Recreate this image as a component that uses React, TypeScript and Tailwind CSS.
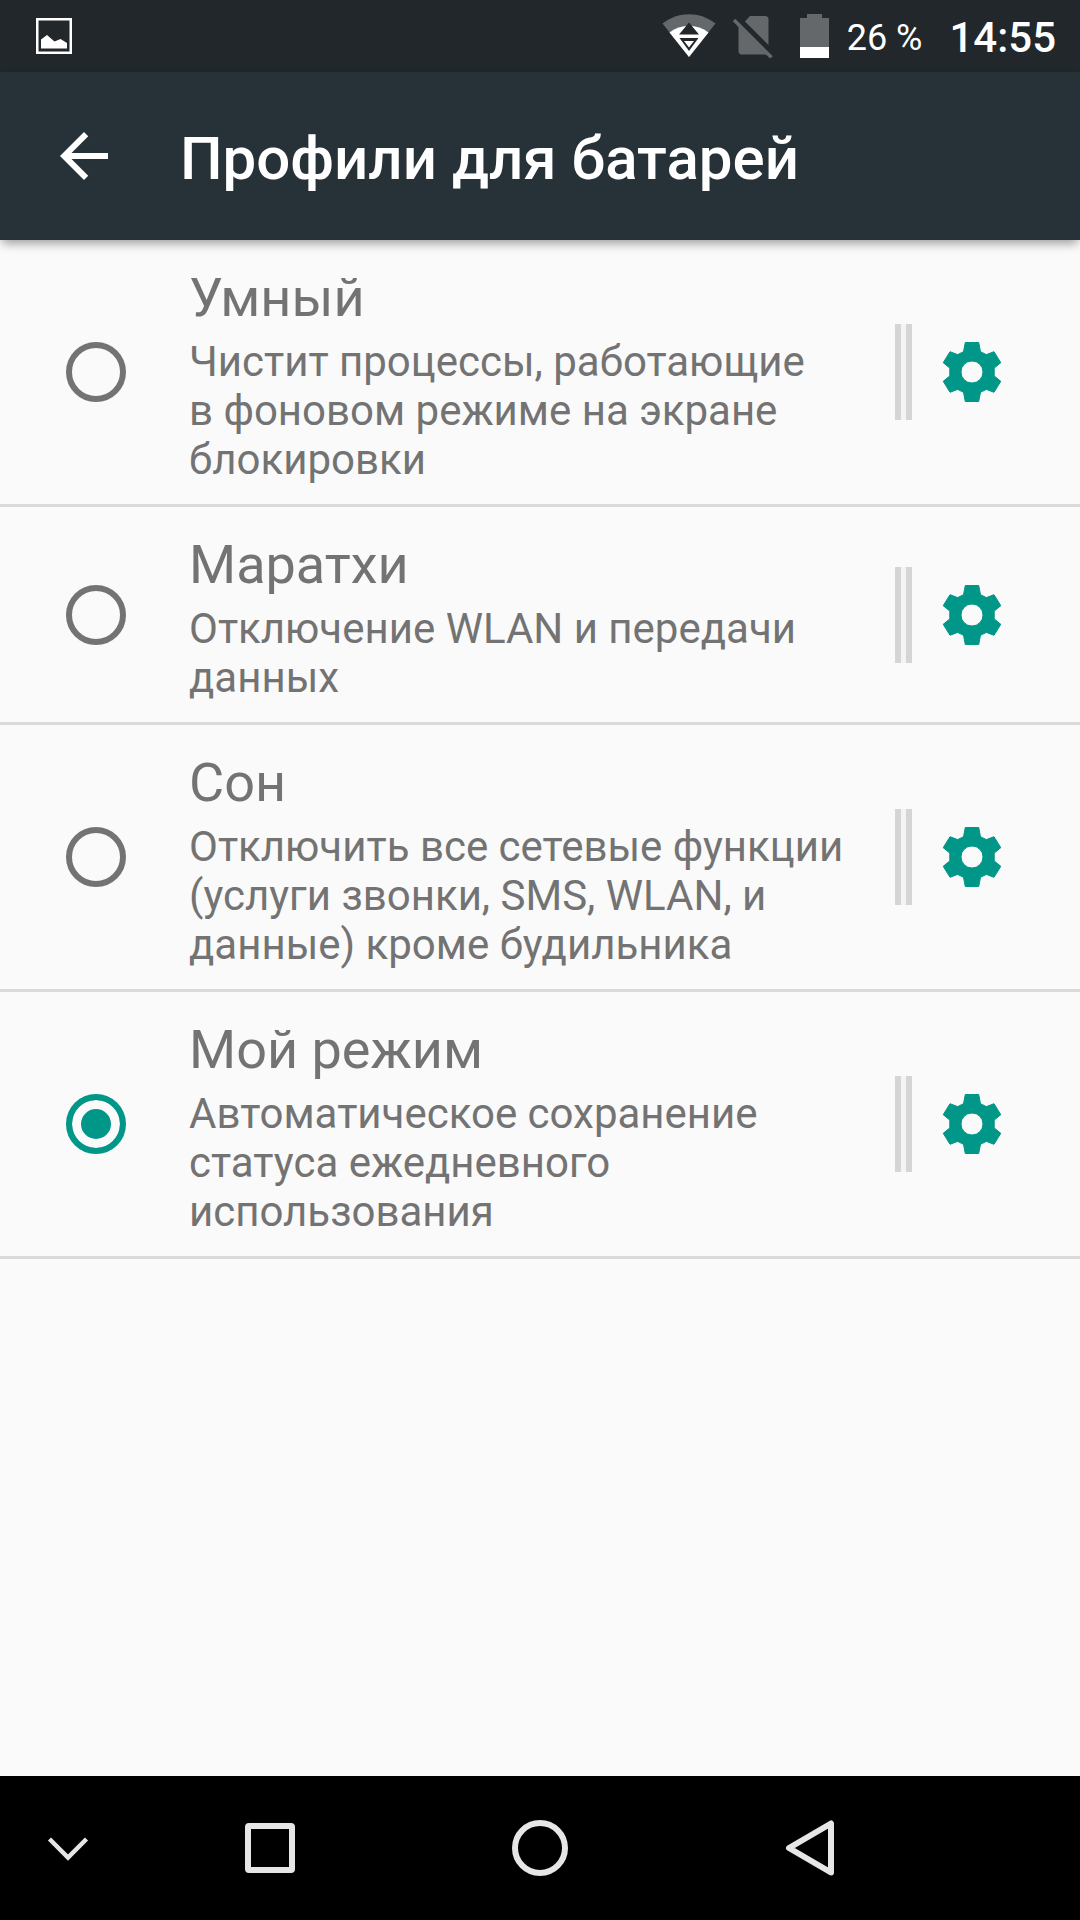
import { useState } from "react";
import { MdArrowBack } from "react-icons/md";

type Profile = { id: string; title: string; description: string };

const profiles: Profile[] = [
  {
    id: "smart",
    title: "Умный",
    description: "Чистит процессы, работающие в\u00a0фоновом режиме на экране блокировки",
  },
  {
    id: "marathon",
    title: "Маратхи",
    description: "Отключение WLAN и передачи данных",
  },
  {
    id: "sleep",
    title: "Сон",
    description: "Отключить все сетевые функции (услуги звонки, SMS, WLAN, и данные) кроме будильника",
  },
  {
    id: "custom",
    title: "Мой режим",
    description: "Автоматическое сохранение статуса ежедневного использования",
  },
];

function StatusBar() {
  return (
    <div className="flex h-[72px] items-center bg-[#22272b] pl-9 pr-6 text-white">
      <svg className="size-9" viewBox="0 0 36 36" aria-hidden="true">
        <rect x="1.25" y="1.25" width="33.5" height="33.5" fill="none" stroke="#fff" strokeWidth="2.5" />
        <path d="M5 30.5V21.5L11 17L18.500 23.500L24.500 21L31 25V30.500Z" fill="#fff" />
      </svg>
      <svg className="ml-auto h-11 w-[54px]" viewBox="0 0 54 44" aria-hidden="true">
        <path d="M0.500 9.500C16 -3 38 -3 53.500 9.500L27 43Z" fill="#64686b" />
        <path d="M7.500 18.500C19 9.500 35 9.500 46.500 18.500L27 43Z" fill="#fff" />
        <path d="M27 8.500L37 20.500H17Z" fill="#22272b" />
        <path d="M17.500 24H36.500L27 37Z" fill="#22272b" />
        <path d="M22 27H32L27 33.500Z" fill="#fff" />
      </svg>
      <svg className="ml-4 h-11 w-[42px]" viewBox="0 0 42 44" aria-hidden="true">
        <path d="M13 7.500L18 2H33Q36.500 2 36.500 5.500V31Z" fill="#64686b" />
        <path d="M6.500 12.500L36 42Q35 40.500 32.500 40.500H10Q6.500 40.500 6.500 37Z" fill="#64686b" />
        <path d="M2 6L39.500 43.500" stroke="#64686b" strokeWidth="3.500" />
      </svg>
      <svg className="ml-[26px] h-11 w-[29px]" viewBox="0 0 29 44" aria-hidden="true">
        <path d="M7 0H22V4H29V33H0V4H7Z" fill="#64686b" />
        <path d="M0 33H29V44H0Z" fill="#fff" />
      </svg>
      <span className="ml-[18px] pt-[3px] text-[36px] leading-[42px]">26 %</span>
      <span className="ml-[27px] pt-[3px] text-[42px] leading-[50px] font-medium">14:55</span>
    </div>
  );
}

function GearIcon() {
  return (
    <svg className="size-[60px]" viewBox="0 0 60 60" aria-hidden="true">
      <path
        fill="currentColor"
        fillRule="evenodd"
        stroke="currentColor"
        strokeWidth="1"
        strokeLinejoin="round"
        d="M23.300 .5H36.700L38.500 9.700L44.300 12.600L52 9.700L58.800 20.700L52.200 26.100V33.900L58.800 39.300L52 50.300L44.300 47.400L38.500 50.300L36.700 59.500H23.300L21.500 50.300L15.700 47.400L8 50.300L1.200 39.300L7.800 33.900V26.100L1.200 20.700L8 9.700L15.700 12.600L21.500 9.700ZM30 19A11 11 0 1 0 30 41A11 11 0 1 0 30 19Z"
      />
    </svg>
  );
}

function ProfileRow({
  profile,
  checked,
  onSelect,
}: {
  profile: Profile;
  checked: boolean;
  onSelect: () => void;
}) {
  return (
    <li className="flex items-center border-b-[3px] border-[#dadada] pl-[66px] pr-[78px]">
      <input
        id={profile.id}
        type="radio"
        name="profile"
        checked={checked}
        onChange={onSelect}
        className="size-[60px] shrink-0 appearance-none rounded-full border-[6px] border-[#737373] checked:border-[#009688] checked:bg-[#009688] checked:shadow-[inset_0_0_0_9px_#fafafa]"
      />
      <label htmlFor={profile.id} className="ml-[63px] flex-1 pt-[26px] pb-5 text-[#737373]">
        <span className="block text-[54px] leading-[63px]">{profile.title}</span>
        <span className="mt-2 block text-[42px] leading-[49px]">{profile.description}</span>
      </label>
      <span className="ml-10 h-24 w-[17px] shrink-0 border-x-[6px] border-[#d5d5d5] bg-[#f4f4f4]" />
      <button type="button" aria-label={`Настройки: ${profile.title}`} className="ml-[30px] shrink-0 text-[#009688]">
        <GearIcon />
      </button>
    </li>
  );
}

function NavBar() {
  return (
    <nav className="grid h-36 grid-cols-8 bg-black text-[#e6e6e6]">
      <button type="button" aria-label="Скрыть панель" className="flex items-center justify-center">
        <svg className="size-12" viewBox="0 0 48 48" fill="none" stroke="currentColor" strokeWidth="4.500">
          <path d="M5.500 15L24 33.500L42.500 15" />
        </svg>
      </button>
      <button type="button" aria-label="Недавние" className="col-span-2 flex items-center justify-center">
        <svg className="size-14" viewBox="0 0 56 56" fill="none" stroke="currentColor" strokeWidth="6">
          <rect x="6" y="6" width="44" height="44" rx="1" />
        </svg>
      </button>
      <button type="button" aria-label="Домой" className="col-span-2 flex items-center justify-center">
        <svg className="size-14" viewBox="0 0 56 56" fill="none" stroke="currentColor" strokeWidth="6">
          <circle cx="28" cy="28" r="25" />
        </svg>
      </button>
      <button type="button" aria-label="Назад" className="col-span-2 flex items-center justify-center">
        <svg
          className="size-14"
          viewBox="0 0 56 56"
          fill="none"
          stroke="currentColor"
          strokeWidth="6"
          strokeLinejoin="round"
        >
          <path d="M49 3.500V52.500L7 28Z" />
        </svg>
      </button>
    </nav>
  );
}

export default function App() {
  const [selected, setSelected] = useState("custom");
  return (
    <div className="flex min-h-screen flex-col bg-[#fafafa] font-[Roboto,sans-serif]">
      <StatusBar />
      <header className="flex h-[168px] items-center bg-[#263238] pl-12 text-white shadow-[0_5px_10px_-2px_rgba(0,0,0,0.4)]">
        <button type="button" aria-label="Назад">
          <MdArrowBack className="size-[72px]" />
        </button>
        <h1 className="ml-[60px] pt-[6px] text-[60px] leading-[70px] font-medium">Профили для батарей</h1>
      </header>
      <main className="flex-1">
        <ul>
          {profiles.map((profile) => (
            <ProfileRow
              key={profile.id}
              profile={profile}
              checked={selected === profile.id}
              onSelect={() => setSelected(profile.id)}
            />
          ))}
        </ul>
      </main>
      <NavBar />
    </div>
  );
}
